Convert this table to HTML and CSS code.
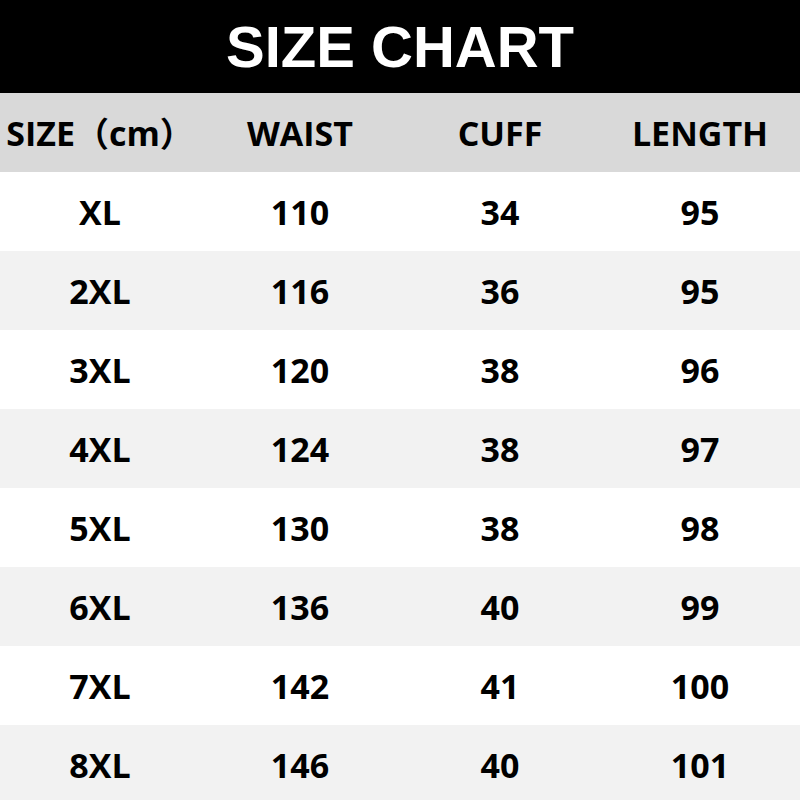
FILE: index.html
```html
<!DOCTYPE html>
<html>
<head>
<meta charset="utf-8">
<link rel="stylesheet" href="styles.css">
</head>
<body>
<div class="chart">
  <div class="title">SIZE CHART</div>
  <div class="table">
    <div class="row head">
      <div class="cell">SIZE<span class="cjk">（</span>cm<span class="cjk">）</span></div>
      <div class="cell">WAIST</div>
      <div class="cell">CUFF</div>
      <div class="cell">LENGTH</div>
    </div>
    <div class="row"><div class="cell">XL</div><div class="cell">110</div><div class="cell">34</div><div class="cell">95</div></div>
    <div class="row alt"><div class="cell">2XL</div><div class="cell">116</div><div class="cell">36</div><div class="cell">95</div></div>
    <div class="row"><div class="cell">3XL</div><div class="cell">120</div><div class="cell">38</div><div class="cell">96</div></div>
    <div class="row alt"><div class="cell">4XL</div><div class="cell">124</div><div class="cell">38</div><div class="cell">97</div></div>
    <div class="row"><div class="cell">5XL</div><div class="cell">130</div><div class="cell">38</div><div class="cell">98</div></div>
    <div class="row alt"><div class="cell">6XL</div><div class="cell">136</div><div class="cell">40</div><div class="cell">99</div></div>
    <div class="row"><div class="cell">7XL</div><div class="cell">142</div><div class="cell">41</div><div class="cell">100</div></div>
    <div class="row alt"><div class="cell">8XL</div><div class="cell">146</div><div class="cell">40</div><div class="cell">101</div></div>
  </div>
</div>
</body>
</html>
```
FILE: styles.css
```css
html, body {
  margin: 0;
  padding: 0;
  background: #ffffff;
  overflow: hidden;
}
.chart {
  width: 800px;
  height: 800px;
  overflow: hidden;
}
.title {
  height: 93px;
  background: #000000;
  color: #ffffff;
  font-family: "Liberation Sans", Arial, sans-serif;
  font-weight: 700;
  font-size: 58px;
  display: flex;
  align-items: center;
  justify-content: center;
}
.table {
  display: flex;
  flex-direction: column;
}
.row {
  display: grid;
  grid-template-columns: repeat(4, 200px);
  height: 79px;
  background: #ffffff;
  font-family: "Open Sans", "Noto Sans", sans-serif;
  font-weight: 700;
  font-size: 34px;
  color: #000000;
}
.row.head {
  background: #d9d9d9;
}
.row.alt {
  background: #f2f2f2;
}
.cell {
  display: flex;
  align-items: center;
  justify-content: center;
  white-space: nowrap;
}
.cjk {
  font-family: "Noto Sans CJK SC", sans-serif;
  font-weight: 700;
}
```
